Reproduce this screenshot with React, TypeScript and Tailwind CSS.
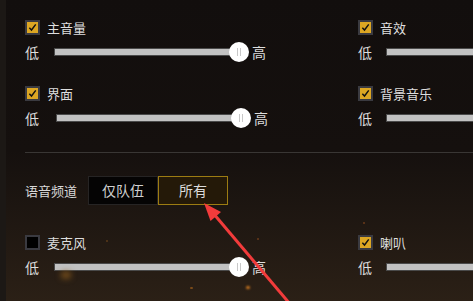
import React from 'react'

const FONT = { fontFamily: '"Noto Sans CJK SC", "Noto Sans", sans-serif' }

function Checkbox({ checked }: { checked: boolean }) {
  return (
    <div className="w-[15px] h-[15px] border-2 border-[#3a3a40] bg-black flex items-center justify-center shrink-0">
      {checked && (
        <div className="w-[11px] h-[11px] bg-[#dca623] flex items-center justify-center">
          <svg viewBox="0 0 10 10" className="w-[9px] h-[9px]">
            <path d="M1.5 5.2 L3.9 7.8 L8.6 1.6" fill="none" stroke="#111" strokeWidth={1.6} />
          </svg>
        </div>
      )}
    </div>
  )
}

function Thumb() {
  return (
    <div className="w-[20px] h-[20px] rounded-full bg-white flex items-center justify-center gap-[2px] shrink-0 -ml-[10px]">
      <div className="w-[1px] h-[8px] bg-[#c8c8c8]" />
      <div className="w-[1px] h-[8px] bg-[#c8c8c8]" />
    </div>
  )
}

function Setting({ label, checked, full, trackStart = 'ml-[15px]' }: { label: string; checked: boolean; full?: boolean; trackStart?: string }) {
  return (
    <div className="flex flex-col">
      <div className="flex items-center gap-[7px] h-[15px]">
        <Checkbox checked={checked} />
        <span className="text-[13px] text-[#dedede] leading-none">{label}</span>
      </div>
      <div className="flex items-center h-[20px] mt-[7px]">
        <span className="text-[14px] text-[#dedede] leading-none w-[14px] shrink-0">低</span>
        {full ? (
          <div className={`h-[8px] bg-[#c2c2c2] border border-[#4a4a4a] ${trackStart} w-[200px] shrink-0`} />
        ) : (
          <>
            <div className={`h-[8px] bg-[#c2c2c2] border border-[#4a4a4a] ${trackStart} w-[185px] shrink-0`} />
            <Thumb />
            <span className="text-[14px] text-[#dedede] leading-none ml-[3px]">高</span>
          </>
        )}
      </div>
    </div>
  )
}

export default function App() {
  return (
    <div
      className="relative w-[473px] h-[301px] overflow-hidden border-l-[6px] border-[#1c1815] bg-linear-to-b from-[#120e0d] via-[#15100e] to-[#2b2016] pl-[19px] pt-[20px]"
      style={FONT}
    >
      <div className="flex">
        <div className="w-[332px] flex flex-col gap-[24px] shrink-0">
          <Setting label="主音量" checked />
          <Setting label="界面" checked trackStart="ml-[17px]" />
        </div>
        <div className="flex flex-col gap-[24px] pl-px">
          <Setting label="音效" checked full trackStart="ml-[14px]" />
          <Setting label="背景音乐" checked full trackStart="ml-[14px]" />
        </div>
      </div>

      <div className="h-px bg-[#393634] mt-[24px]" />

      <div className="flex items-center mt-[23px] h-[29px]">
        <span className="text-[13px] text-[#d8d8d8] leading-none w-[63px]">语音频道</span>
        <div className="flex h-full">
          <div className="w-[70px] h-full bg-[#050404] border border-[#262424] flex items-center justify-center text-[14px] text-[#cfcfcf]">
            仅队伍
          </div>
          <div className="w-[70px] h-full bg-[#241908] border border-[#9c7c12] flex items-center justify-center text-[14px] text-[#dcdcdc]">
            所有
          </div>
        </div>
      </div>

      <div className="flex mt-[30px]">
        <div className="w-[332px] shrink-0">
          <Setting label="麦克风" checked={false} />
        </div>
        <div className="pl-px">
          <Setting label="喇叭" checked full trackStart="ml-[14px]" />
        </div>
      </div>

      {/* sparks */}
      <div className="absolute left-[55px] top-[272px] w-[10px] h-[6px] rounded-full bg-[#8a5a1c] blur-[3px]" />
      <div className="absolute left-[240px] top-[286px] w-[4px] h-[3px] rounded-full bg-[#d07a20] blur-[1px]" />
      <div className="absolute left-[184px] top-[287px] w-[3px] h-[2px] rounded-full bg-[#7a4a18]" />
      <div className="absolute left-[251px] top-[238px] w-[2px] h-[2px] rounded-full bg-[#6a3a1a]" />
      <div className="absolute left-[357px] top-[222px] w-[2px] h-[2px] rounded-full bg-[#6a3a1a]" />
      <div className="absolute left-[100px] top-[240px] w-[2px] h-[2px] rounded-full bg-[#5a3a1a]" />

      <svg className="absolute left-0 top-0 pointer-events-none" width="473" height="301" viewBox="0 0 473 301">
        <line x1="284" y1="304" x2="207" y2="213" stroke="#f23b3b" strokeWidth="3" />
        <polygon points="198,203 204.5,221 215,212" fill="#f23b3b" />
      </svg>
    </div>
  )
}
